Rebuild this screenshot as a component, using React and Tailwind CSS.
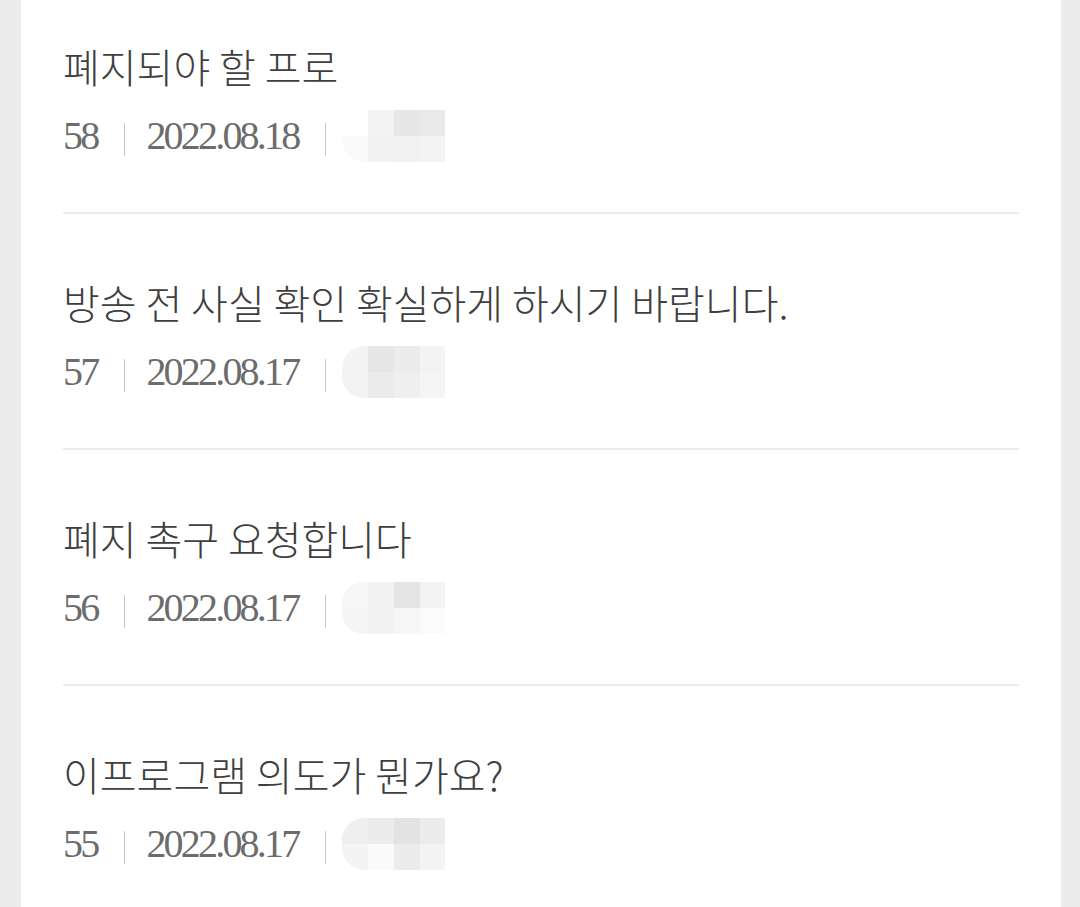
import React from "react";

const rows = [
  { title: "폐지되야 할 프로", no: "58", date: "2022.08.18", blob: ["#ffffff", "#f3f3f3", "#e7e7e7", "#e9e9e9", "#fafafa", "#f2f2f2", "#f1f1f1", "#f3f3f3"] },
  { title: "방송 전 사실 확인 확실하게 하시기 바랍니다.", no: "57", date: "2022.08.17", blob: ["#f4f4f4", "#e6e6e6", "#ececec", "#f3f3f3", "#f3f3f3", "#ebebeb", "#efefef", "#f5f5f5"] },
  { title: "폐지 촉구 요청합니다", no: "56", date: "2022.08.17", blob: ["#f6f6f6", "#f2f2f2", "#e5e5e5", "#f3f3f3", "#f5f5f5", "#f2f2f2", "#f7f7f7", "#fbfbfb"] },
  { title: "이프로그램 의도가 뭔가요?", no: "55", date: "2022.08.17", blob: ["#efefef", "#ececec", "#e3e3e3", "#ececec", "#f4f4f4", "#fafafa", "#ececec", "#f4f4f4"] },
];

function Blob({ colors }) {
  return (
    <div className="ml-[16px] grid h-[52px] w-[103px] grid-cols-4 grid-rows-2 overflow-hidden rounded-l-[22px]">
      {colors.map((c, i) => (
        <div key={i} style={{ backgroundColor: c }} />
      ))}
    </div>
  );
}

function Row({ row, first, last }) {
  return (
    <div
      className={
        (first ? "pt-[42px] " : "pt-[64px] ") +
        (last ? "pb-[50px] " : "pb-[50px] border-b-2 border-[#ececec]")
      }
    >
      <div
        className="h-[48px] whitespace-nowrap text-[40px] leading-[48px] font-light tracking-[0px] text-[#3f3f3f]"
        style={{ fontFamily: '"Noto Sans CJK KR", "Noto Sans", sans-serif' }}
      >
        {row.title}
      </div>
      <div
        className="mt-[20px] flex h-[52px] items-center text-[40px] leading-[52px] tracking-[-2.8px] text-[#6c6c6c]"
        style={{ fontFamily: '"Liberation Serif", "Times New Roman", serif' }}
      >
        <span>{row.no}</span>
        <span className="ml-[27px] mr-[21px] mt-[6px] h-[33px] w-[1px] bg-[#c8c8c8]" />
        <span>{row.date}</span>
        <span className="ml-[27px] mt-[6px] h-[33px] w-[1px] bg-[#c8c8c8]" />
        <Blob colors={row.blob} />
      </div>
    </div>
  );
}

export default function App() {
  return (
    <div className="flex h-[907px] w-[1080px] overflow-hidden bg-[#ececec]">
      <div className="ml-[21px] w-[1040px] bg-white pl-[42px] pr-[42px]">
        {rows.map((r, i) => (
          <Row key={i} row={r} first={i === 0} last={i === rows.length - 1} />
        ))}
      </div>
    </div>
  );
}
